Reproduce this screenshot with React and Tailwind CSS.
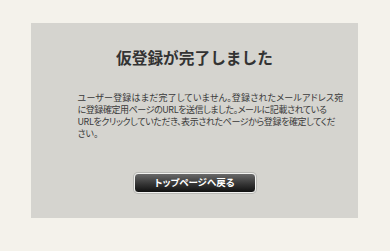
import React from "react";

export default function App() {
  return (
    <div className="w-[390px] h-[251px] bg-[#f4f2eb] pt-[23px] pl-[31px] font-['Noto_Sans_CJK_JP','Noto_Sans',sans-serif]">
      <div className="w-[327px] h-[195px] bg-[#d5d4cf] flex flex-col items-center pt-[23px]">
        <h1 className="text-[15.7px] leading-[24px] font-bold text-[#333333]">
          仮登録が完了しました
        </h1>
        <p className="mt-[22px] w-[234px] text-[9px] leading-[12px] text-[#3a3a3a] whitespace-nowrap [font-feature-settings:'palt']">
          <span className="block tracking-[0.18px]">ユーザー登録はまだ完了していません。登録されたメールアドレス宛</span>
          <span className="block tracking-[-0.42px]">に登録確定用ページのURLを送信しました。メールに記載されている</span>
          <span className="block tracking-[-0.4px]">URLをクリックしていただき、表示されたページから登録を確定してくだ</span>
          <span className="block">さい。</span>
        </p>
        <button className="mt-[33px] w-[122px] h-[20px] rounded-[4px] border border-[#f2f2f0] bg-gradient-to-b from-[#6a6a6a] via-[#3a3a3a] to-[#111111] text-white text-[9.5px] font-bold leading-none flex items-center justify-center shadow-[0_0_0_1px_#b8b8b4] [font-feature-settings:'palt']">
          トップページへ戻る
        </button>
      </div>
    </div>
  );
}
